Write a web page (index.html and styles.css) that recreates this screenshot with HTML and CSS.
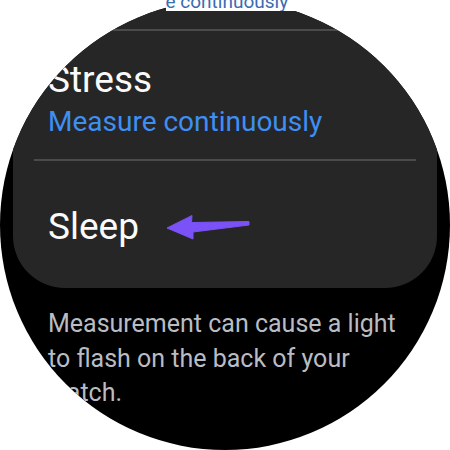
FILE: index.html
```html
<!DOCTYPE html>
<html lang="en">
<head>
    <meta charset="UTF-8">
    <meta name="viewport" content="width=device-width, initial-scale=1.0">
    <title>Health settings</title>
    <link rel="stylesheet" href="styles.css">
</head>
<body>
    <div class="watch">
        <!-- Settings card, scrolled so only the tail of the list shows -->
        <div class="card">
            <div class="divider"></div>
            <div class="item">
                <div class="item-title">Stress</div>
                <div class="item-sub">Measure continuously</div>
            </div>
            <div class="divider divider-mid"></div>
            <div class="item item-sleep">
                <div class="item-title">Sleep</div>
                <svg class="pointer" width="84" height="26" viewBox="0 0 84 26">
                    <path d="M1 14 L26 1.5 L25.5 8.5 L83 7.5 L83 11 L27 18 L27 25 Z" fill="#7b52f7" stroke="#7b52f7" stroke-width="1" stroke-linejoin="round"/>
                </svg>
            </div>
        </div>

        <p class="note">Measurement can cause a light to flash on the back of your watch.</p>
    </div>

    <!-- Previous row peeking in above the bezel -->
    <div class="peek">
        <span class="peek-text">Measure continuously</span>
    </div>
</body>
</html>
```

FILE: styles.css
```css
/* Round watch screen */
body {
    margin: 0;
    background-color: #fff;
    font-family: Roboto, "Noto Sans", sans-serif;
}

.watch {
    position: relative;
    width: 450px;
    height: 450px;
    border-radius: 50%;
    background-color: #000;
    overflow: hidden;
}

.card {
    margin: 0 13px;
    padding: 29px 0 41px;
    background-color: #262626;
    border-radius: 0 0 52px 52px;
}

.divider {
    height: 2px;
    margin: 0 21px;
    background-color: #4a4a4a;
}

.divider-mid {
    margin-top: 20px;
}

.item {
    padding-left: 35px;
}

.item-title {
    margin-top: 29px;
    font-size: 37px;
    line-height: 40px;
    color: #fafafa;
}

.item-sub {
    margin-top: 5px;
    font-size: 28px;
    line-height: 34px;
    color: #3f8ff2;
}

.item-sleep {
    display: flex;
    align-items: center;
    gap: 27px;
}

.item-sleep .item-title {
    margin-top: 46px;
}

.pointer {
    margin-top: 46px;
}

.note {
    width: 360px;
    margin: 19px 0 0 48px;
    font-size: 25px;
    line-height: 34.5px;
    color: #b9bdc3;
}

/* faded subtitle of the row above, sitting over the top edge */
.peek {
    position: absolute;
    top: 0;
    left: 166px;
    width: 130px;
    height: 11px;
    overflow: hidden;
    background-color: #fff;
}

.peek-text {
    display: block;
    width: 300px;
    margin: -8px 0 0 -64px;
    font-size: 19px;
    line-height: 19px;
    color: #3b6cb0;
}
```
